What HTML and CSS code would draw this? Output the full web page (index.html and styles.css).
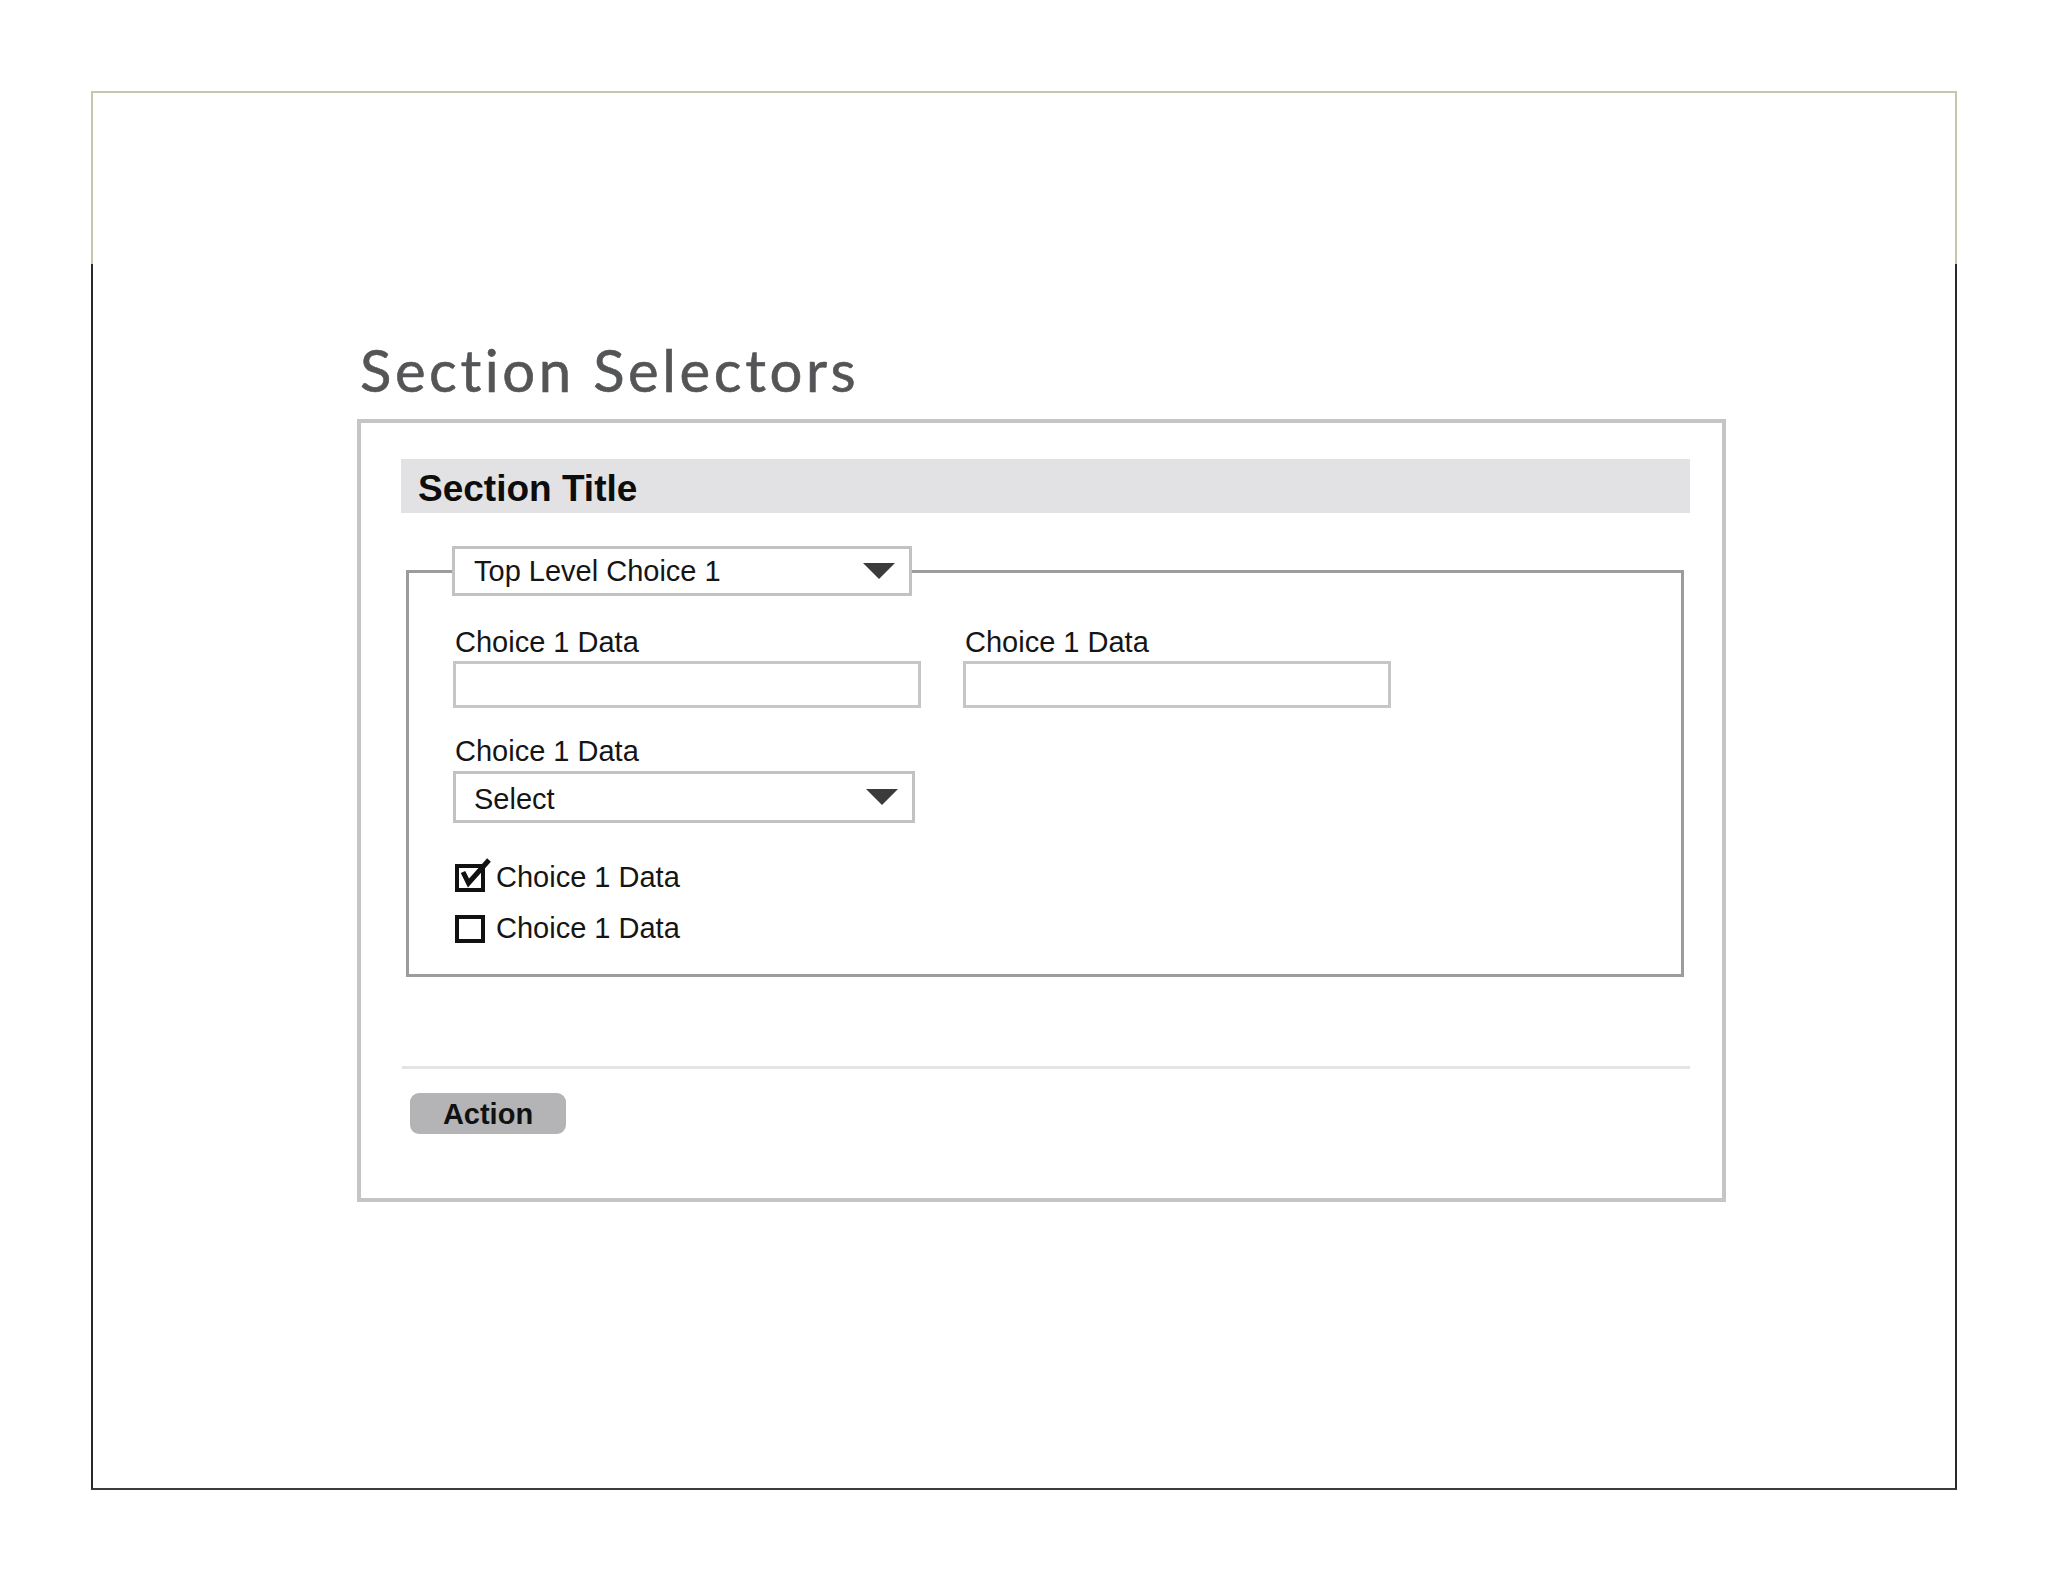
FILE: index.html
```html
<!DOCTYPE html>
<html lang="en">
<head>
<meta charset="utf-8">
<title>Section Selectors</title>
<link rel="stylesheet" href="styles.css">
</head>
<body>
<div class="page">
  <div class="frame">
    <div class="frame-top"></div>
    <div class="frame-body">
      <h1 class="heading">Section Selectors</h1>
      <section class="panel">
        <div class="panel-title">Section Title</div>
        <fieldset class="group">
          <legend class="group-legend">
            <div class="dropdown legend-dropdown">
              <span class="dropdown-text">Top Level Choice 1</span>
              <svg class="caret" viewBox="0 0 32 16" width="32" height="16"><polygon points="0,0 32,0 16,16" fill="#3b3b3b"/></svg>
            </div>
          </legend>
          <div class="group-body">
            <div class="field-row">
              <div class="field field-wide">
                <div class="field-label">Choice 1 Data</div>
                <div class="text-input"></div>
              </div>
              <div class="field field-narrow">
                <div class="field-label">Choice 1 Data</div>
                <div class="text-input"></div>
              </div>
            </div>
            <div class="field field-select">
              <div class="field-label">Choice 1 Data</div>
              <div class="dropdown select-dropdown">
                <span class="dropdown-text">Select</span>
                <svg class="caret" viewBox="0 0 32 16" width="32" height="16"><polygon points="0,0 32,0 16,16" fill="#3b3b3b"/></svg>
              </div>
            </div>
            <div class="checks">
              <div class="check-row">
                <svg class="checkbox" viewBox="0 0 36 34" width="36" height="34">
                  <rect x="2" y="8" width="26" height="24" fill="#fff" stroke="#111" stroke-width="4"/>
                  <path d="M8 14 L13.5 25 L34 2" fill="none" stroke="#111" stroke-width="5" stroke-linejoin="miter"/>
                </svg>
                <span class="check-label">Choice 1 Data</span>
              </div>
              <div class="check-row">
                <svg class="checkbox" viewBox="0 0 36 34" width="36" height="34">
                  <rect x="2" y="8" width="26" height="24" fill="#fff" stroke="#111" stroke-width="4"/>
                </svg>
                <span class="check-label">Choice 1 Data</span>
              </div>
            </div>
          </div>
        </fieldset>
        <div class="separator"></div>
        <div class="actions">
          <button class="action-btn" type="button">Action</button>
        </div>
      </section>
    </div>
  </div>
</div>
</body>
</html>
```
FILE: styles.css
```css
* { box-sizing: border-box; }

html, body {
  margin: 0;
  padding: 0;
  background: #ffffff;
}

body {
  font-family: "Liberation Sans", Arial, sans-serif;
  color: #141414;
}

.page {
  padding: 91px 0 0 91px;
}

.frame {
  width: 1866px;
}

.frame-top {
  height: 173px;
  border-top: 2px solid #c6c7ad;
  border-left: 2px solid #c6c7ad;
  border-right: 2px solid #c6c7ad;
}

.frame-body {
  height: 1226px;
  border-left: 2px solid #2a2a2a;
  border-right: 2px solid #2a2a2a;
  border-bottom: 2px solid #3c3c3c;
  padding: 77px 0 0 264px;
}

.heading {
  margin: 0 0 20px 3px;
  font-family: "Lato", "Open Sans", sans-serif;
  font-weight: 400;
  font-size: 58px;
  line-height: 58px;
  height: 58px;
  letter-spacing: 3.6px;
  color: #545557;
  -webkit-text-stroke: 0.6px #545557;
}

.panel {
  width: 1369px;
  height: 783px;
  border: 4px solid #c5c5c5;
  padding: 36px 0 64px 0;
}

.panel-title {
  margin-left: 40px;
  width: 1289px;
  height: 54px;
  padding: 7px 0 0 17px;
  background: #e2e2e4;
  font-weight: 700;
  font-size: 37px;
  line-height: 45px;
  color: #0d0d0d;
}

.group {
  margin: 33px 0 0 45px;
  padding: 0;
  width: 1278px;
  min-inline-size: 0;
  border: 3px solid #9c9c9c;
}

.group-legend {
  margin-left: 43px;
  padding: 0;
}

.dropdown {
  display: flex;
  align-items: center;
  justify-content: space-between;
  border: 3px solid #c2c2c2;
  background: #fff;
  font-size: 29px;
  line-height: 34px;
  color: #151515;
}

.dropdown-text {
  display: block;
}

.legend-dropdown {
  width: 460px;
  height: 50px;
  padding: 0 14px 1px 19px;
}

.select-dropdown {
  width: 462px;
  height: 52px;
  padding: 0 14px 0 18px;
}

.select-dropdown .dropdown-text {
  padding-top: 4px;
}

.caret {
  display: block;
  flex: none;
}

.group-body {
  padding: 29px 0 29px 44px;
}

.field-row {
  display: flex;
  gap: 42px;
}

.field-label {
  font-size: 29px;
  line-height: 34px;
  padding-left: 2px;
  margin-bottom: 2px;
  color: #151515;
}

.field-wide { width: 468px; }
.field-narrow { width: 428px; }

.text-input {
  height: 47px;
  border: 3px solid #c6c6c6;
  background: #fff;
}

.field-select {
  margin-top: 26px;
}

.field-select .field-label {
  margin-bottom: 3px;
}

.checks {
  margin-top: 37px;
  display: flex;
  flex-direction: column;
  gap: 17px;
}

.check-row {
  display: flex;
  align-items: center;
  gap: 5px;
  height: 34px;
  padding-left: 2px;
}

.checkbox {
  display: block;
  flex: none;
  margin-top: -4px;
}

.check-label {
  font-size: 29px;
  line-height: 34px;
  color: #151515;
}

.separator {
  margin: 89px 0 0 41px;
  width: 1288px;
  height: 3px;
  background: #e4e4e4;
}

.actions {
  margin: 24px 0 0 49px;
}

.action-btn {
  display: block;
  width: 156px;
  height: 41px;
  padding: 1px 0 0 0;
  border: 0;
  border-radius: 9px;
  background: #b4b4b6;
  font-family: "Liberation Sans", Arial, sans-serif;
  font-weight: 700;
  font-size: 29px;
  line-height: 40px;
  color: #111;
  text-align: center;
}
```
